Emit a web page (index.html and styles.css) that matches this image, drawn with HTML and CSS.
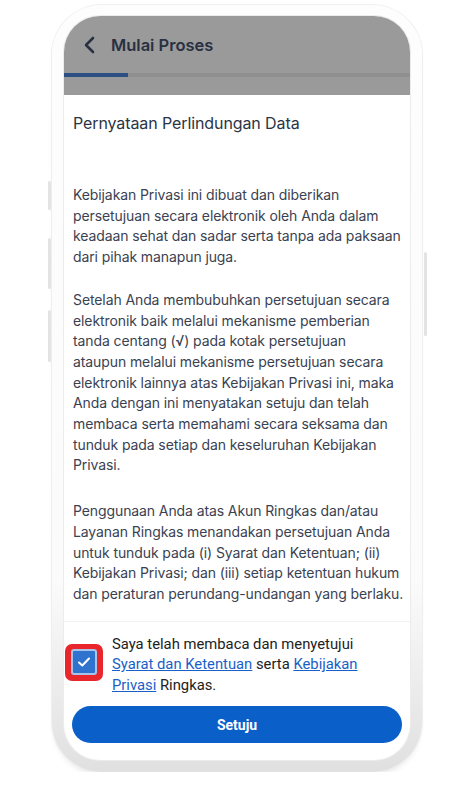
FILE: index.html
```html
<!DOCTYPE html>
<html lang="id">
<head>
    <meta charset="UTF-8">
    <meta name="viewport" content="width=device-width, initial-scale=1.0">
    <title>Ringkas - Mulai Proses</title>
    <link rel="stylesheet" href="styles.css">
</head>
<body>
    <div class="phone">
        <span class="side-btn side-btn-1"></span>
        <span class="side-btn side-btn-2"></span>
        <span class="side-btn side-btn-3"></span>
        <span class="side-btn side-btn-right"></span>

        <div class="screen">
            <div class="topbar">
                <div class="topbar-row">
                    <svg class="back" width="14" height="18" viewBox="0 0 14 18">
                        <path d="M10 2 L3 9 L10 16" fill="none" stroke="#283042" stroke-width="2.6" stroke-linecap="round" stroke-linejoin="round"/>
                    </svg>
                    <span class="topbar-title">Mulai Proses</span>
                </div>
                <div class="progress">
                    <div class="progress-fill"></div>
                </div>
            </div>

            <div class="sheet">
                <div class="sheet-body">
                    <h2 class="sheet-title">Pernyataan Perlindungan Data</h2>
                    <p class="para para-1">Kebijakan Privasi ini dibuat dan diberikan persetujuan secara elektronik oleh Anda dalam keadaan sehat dan sadar serta tanpa ada paksaan dari pihak manapun juga.</p>
                    <p class="para para-2">Setelah Anda membubuhkan persetujuan secara elektronik baik melalui mekanisme pemberian tanda centang (√) pada kotak persetujuan<br>ataupun melalui mekanisme persetujuan secara elektronik lainnya atas Kebijakan Privasi ini, maka Anda dengan ini menyatakan setuju dan telah membaca serta memahami secara seksama dan tunduk pada setiap dan keseluruhan Kebijakan Privasi.</p>
                    <p class="para para-3">Penggunaan Anda atas Akun Ringkas dan/atau Layanan Ringkas menandakan persetujuan Anda untuk tunduk pada (i) Syarat dan Ketentuan; (ii) Kebijakan Privasi; dan (iii) setiap ketentuan hukum dan peraturan perundang-undangan yang berlaku.</p>
                </div>

                <div class="sheet-footer">
                    <label class="agree">
                        <span class="check-highlight">
                            <span class="check-box">
                                <svg width="14" height="12" viewBox="0 0 14 12">
                                    <path d="M2 6.5 L5.3 9.5 L12 2.5" fill="none" stroke="#fff" stroke-width="2" stroke-linecap="round" stroke-linejoin="round"/>
                                </svg>
                            </span>
                        </span>
                        <span class="agree-text">Saya telah membaca dan menyetujui <a href="#">Syarat dan Ketentuan</a> serta <a href="#">Kebijakan Privasi</a> Ringkas.</span>
                    </label>
                    <button class="btn">Setuju</button>
                </div>
            </div>
        </div>
    </div>
</body>
</html>
```

FILE: styles.css
```css
* {
    margin: 0;
    padding: 0;
    box-sizing: border-box;
}

body {
    font-family: Inter, 'Noto Sans', sans-serif;
    background-color: #fff;
    color: #3a4252;
}

.phone {
    position: relative;
    width: 370px;
    height: 767px;
    margin: 5px 0 0 52px;
    padding: 11px 12px 12px 12px;
    border-radius: 50px;
    background: linear-gradient(#fdfdfd, #fbfbfb 75%, #e0e0e0);
    box-shadow: 0 0 0 1px #efefef, 0 5px 6px -3px rgba(0,0,0,0.12);
}

.side-btn {
    position: absolute;
    left: -4px;
    width: 3px;
    border-radius: 2px;
    background: #e3e3e3;
}

.side-btn-1 {
    top: 176px;
    height: 29px;
}

.side-btn-2 {
    top: 233px;
    height: 51px;
}

.side-btn-3 {
    top: 305px;
    height: 52px;
}

.side-btn-right {
    left: auto;
    right: -5px;
    top: 247px;
    height: 84px;
}

.screen {
    width: 346px;
    height: 744px;
    border-radius: 36px;
    overflow: hidden;
    background: #fff;
    box-shadow: 0 0 0 1px #ececec;
}

.topbar {
    height: 79px;
    background-color: #9a9a9a;
    padding-top: 19px;
}

.topbar-row {
    display: flex;
    align-items: center;
    height: 20px;
    padding-left: 19px;
}

.back {
    display: block;
}

.topbar-title {
    margin-left: 14px;
    font-size: 16.5px;
    font-weight: 600;
    color: #283042;
}

.progress {
    margin-top: 18px;
    height: 4px;
    background: #8f8f8f;
}

.progress-fill {
    width: 64px;
    height: 4px;
    background: #2b4f82;
}

.sheet {
    padding: 0 5px 0 9px;
}

.sheet-title {
    margin-top: 18px;
    font-size: 16px;
    line-height: 20px;
    font-weight: 400;
    letter-spacing: -0.1px;
    color: #2b3445;
}

.para {
    font-size: 14px;
    line-height: 20.7px;
    letter-spacing: -0.1px;
    color: #3a4252;
}

.para-1 {
    margin-top: 52px;
}

.para-2 {
    margin-top: 22px;
}

.para-3 {
    margin-top: 25px;
}

.sheet-footer {
    margin: 16px -5px 0 -9px;
    padding: 12px 8px 0;
    border-top: 1px solid #f2f2f2;
}

.agree {
    display: flex;
    align-items: flex-start;
    gap: 9px;
}

.check-highlight {
    flex: none;
    display: flex;
    align-items: center;
    justify-content: center;
    width: 38px;
    height: 37px;
    margin: 10px 0 0 -7px;
    border-radius: 7px;
    background: #e8262c;
}

.check-box {
    display: flex;
    align-items: center;
    justify-content: center;
    width: 26px;
    height: 26px;
    border-radius: 3px;
    background: #2f73cf;
    border: 2px solid #a9c4ea;
}

.agree-text {
    max-width: 250px;
    font-family: Roboto, 'Noto Sans', sans-serif;
    font-size: 14.8px;
    line-height: 20.5px;
    color: #222;
}

.agree-text a {
    color: #1a5fc8;
}

.btn {
    display: block;
    width: 100%;
    height: 37px;
    margin-top: 11px;
    border: none;
    border-radius: 19px;
    background-color: #0b5fc9;
    color: white;
    font-family: Roboto, sans-serif;
    font-size: 14px;
    font-weight: 700;
    cursor: pointer;
}
```
